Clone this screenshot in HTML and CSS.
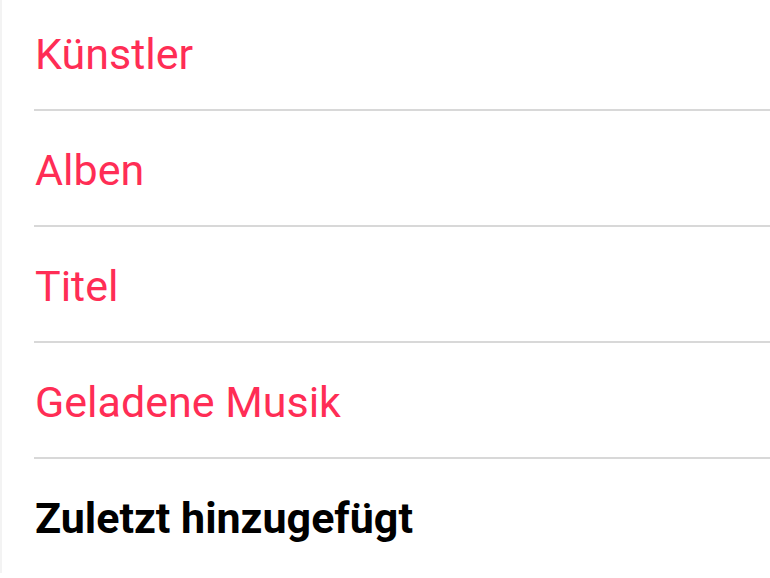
FILE: index.html
```html
<!DOCTYPE html>
<html lang="de">
<head>
<meta charset="utf-8">
<title>Mediathek</title>
<link rel="stylesheet" href="styles.css">
</head>
<body>
<div class="page">
  <ul class="list">
    <li class="row"><span class="link">Künstler</span></li>
    <li class="row"><span class="link">Alben</span></li>
    <li class="row"><span class="link">Titel</span></li>
    <li class="row"><span class="link">Geladene Musik</span></li>
  </ul>
  <h2 class="section">Zuletzt hinzugefügt</h2>
</div>
</body>
</html>
```
FILE: styles.css
```css
html, body {
  margin: 0;
  padding: 0;
  background: #ffffff;
}
body {
  width: 770px;
  height: 578px;
  overflow: hidden;
  font-family: Roboto, "Noto Sans", "Liberation Sans", sans-serif;
}
.page {
  height: 578px;
  border-left: 2px solid #f3f3f3;
  box-sizing: border-box;
  padding-left: 32px;
}
.list {
  list-style: none;
  margin: -5px 0 0 0;
  padding: 0;
}
.row {
  height: 114px;
  border-bottom: 2px solid #d8d8d8;
  display: flex;
  align-items: center;
}
.link {
  color: #ff2d55;
  font-size: 43px;
  padding-left: 1px;
  padding-top: 4px;
}
.section {
  margin: 0;
  height: 116px;
  display: flex;
  align-items: center;
  padding-left: 1px;
  padding-top: 2px;
  box-sizing: border-box;
  font-size: 43px;
  font-weight: 700;
  color: #000000;
}
```
